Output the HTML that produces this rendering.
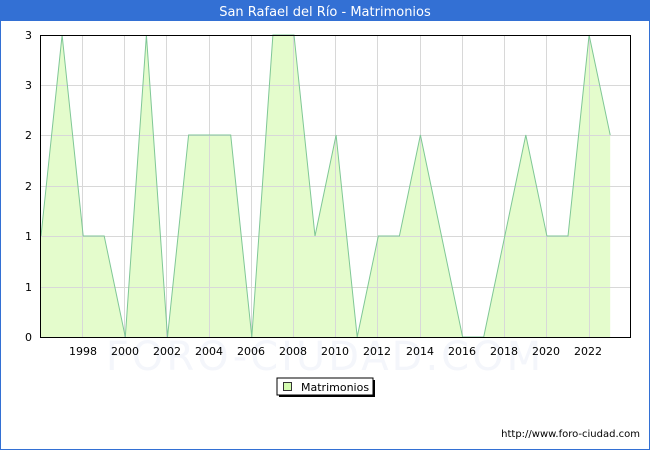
<!DOCTYPE html>
<html><head><meta charset="utf-8"><style>
body{margin:0;width:650px;height:450px;overflow:hidden;background:#fff;font-family:"DejaVu Sans","Liberation Sans",sans-serif;}
</style></head><body>
<svg width="650" height="450" xmlns="http://www.w3.org/2000/svg" font-family="DejaVu Sans, Liberation Sans, sans-serif">
<rect x="0" y="0" width="650" height="450" fill="#3370d4"/>
<rect x="1" y="21" width="648" height="428" fill="#fff"/>
<text x="325" y="16" font-size="13" fill="#fff" text-anchor="middle">San Rafael del Río - Matrimonios</text>
<text x="325" y="370" font-size="40" fill="#f4f6fb" text-anchor="middle" letter-spacing="3">FORO-CIUDAD.COM</text>
<polygon fill="#e4fccc" stroke="none" points="41,337 41,236 62.1,35 83.2,236 104.2,236 125.3,337 146.4,35 167.5,337 188.6,135 209.6,135 230.7,135 251.8,337 272.9,35 294,35 315,236 336.1,135 357.2,337 378.3,236 399.4,236 420.4,135 441.5,236 462.6,337 483.7,337 504.8,236 525.8,135 546.9,236 568,236 589.1,35 610.2,135 610.2,337"/>
<g stroke="#d8d8d8" stroke-width="1">
<line x1="40" y1="85.5" x2="630" y2="85.5"/><line x1="40" y1="135.5" x2="630" y2="135.5"/><line x1="40" y1="186.5" x2="630" y2="186.5"/><line x1="40" y1="236.5" x2="630" y2="236.5"/><line x1="40" y1="287.5" x2="630" y2="287.5"/>
<line x1="82.5" y1="35" x2="82.5" y2="337"/><line x1="124.5" y1="35" x2="124.5" y2="337"/><line x1="166.5" y1="35" x2="166.5" y2="337"/><line x1="209.5" y1="35" x2="209.5" y2="337"/><line x1="251.5" y1="35" x2="251.5" y2="337"/><line x1="293.5" y1="35" x2="293.5" y2="337"/><line x1="335.5" y1="35" x2="335.5" y2="337"/><line x1="377.5" y1="35" x2="377.5" y2="337"/><line x1="420.5" y1="35" x2="420.5" y2="337"/><line x1="462.5" y1="35" x2="462.5" y2="337"/><line x1="504.5" y1="35" x2="504.5" y2="337"/><line x1="546.5" y1="35" x2="546.5" y2="337"/><line x1="589.5" y1="35" x2="589.5" y2="337"/>
</g>
<polyline fill="none" stroke="#7fc796" stroke-width="1" points="41,236 62.1,35 83.2,236 104.2,236 125.3,337 146.4,35 167.5,337 188.6,135 209.6,135 230.7,135 251.8,337 272.9,35 294,35 315,236 336.1,135 357.2,337 378.3,236 399.4,236 420.4,135 441.5,236 462.6,337 483.7,337 504.8,236 525.8,135 546.9,236 568,236 589.1,35 610.2,135"/>
<rect x="40.5" y="35.5" width="590" height="302" fill="none" stroke="#000" stroke-width="1"/>
<g font-size="11" fill="#000" text-anchor="end">
<text x="32" y="341">0</text><text x="32" y="291">1</text><text x="32" y="240">1</text><text x="32" y="190">2</text><text x="32" y="139">2</text><text x="32" y="89">3</text><text x="32" y="39">3</text>
</g>
<g font-size="11" fill="#000" text-anchor="middle">
<text x="83" y="355">1998</text><text x="125" y="355">2000</text><text x="167" y="355">2002</text><text x="209" y="355">2004</text><text x="251" y="355">2006</text><text x="293" y="355">2008</text><text x="335" y="355">2010</text><text x="377" y="355">2012</text><text x="420" y="355">2014</text><text x="462" y="355">2016</text><text x="504" y="355">2018</text><text x="546" y="355">2020</text><text x="588" y="355">2022</text>
</g>
<rect x="279" y="380" width="96" height="17" fill="#000"/>
<rect x="277" y="378" width="96" height="17" fill="#fff" stroke="#000" stroke-width="1"/>
<rect x="283.5" y="382.5" width="8" height="8" fill="#d4fcb0" stroke="#333" stroke-width="1"/>
<text x="301" y="391" font-size="11" fill="#000">Matrimonios</text>
<text x="640" y="437" font-size="10" fill="#000" text-anchor="end">http://www.foro-ciudad.com</text>
</svg>
</body></html>
